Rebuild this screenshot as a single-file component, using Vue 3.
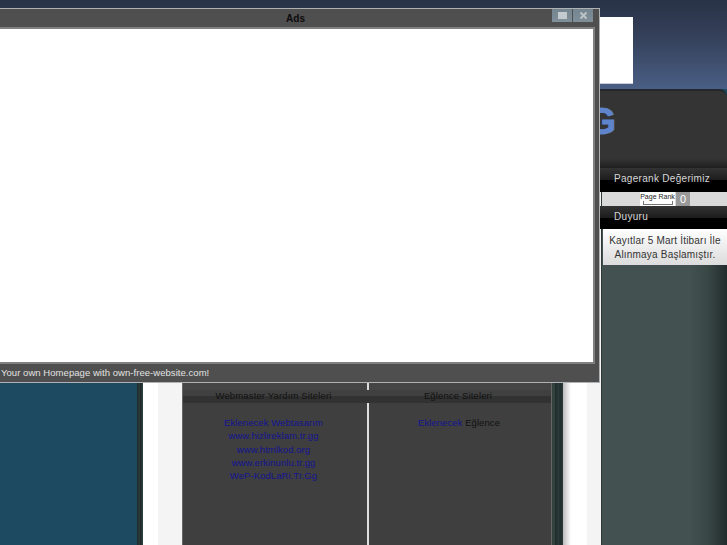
<script setup>
const webmasterLinks = [
  'Eklenecek Webtasarım',
  'www.hizlireklam.tr.gg',
  'www.htmlkod.org',
  'www.erkinunlu.tr.gg',
  'WeP-KodLaRi.Tr.Gg'
]
</script>

<template>
  <div class="page">
    <!-- Top band -->
    <header class="top">
      <div class="top-box"></div>
    </header>

    <div class="banner">
      <span class="logo">G</span>
    </div>

    <div class="columns">
      <div class="side-blue"></div>
      <div class="gutter"></div>
      <div class="margin-left"></div>

      <main class="main">
        <section class="col">
          <h3 class="col-head">Webmaster Yardım Siteleri</h3>
          <div class="col-body">
            <a v-for="link in webmasterLinks" :key="link" class="link">{{ link }}</a>
          </div>
        </section>
        <section class="col col-right">
          <h3 class="col-head">Eğlence Siteleri</h3>
          <div class="col-body">
            <div><a class="link inline">Eklenecek</a> Eğlence</div>
          </div>
        </section>
      </main>

      <div class="gutter wide"></div>
      <div class="margin-right"></div>

      <aside class="sidebar">
        <div class="side-head center">Pagerank Değerimiz</div>
        <div class="rank-strip">
          <div class="rank">
            <div class="rank-label">
              <span>Page Rank</span>
              <i class="rank-bar"></i>
            </div>
            <div class="rank-value">0</div>
          </div>
        </div>
        <div class="side-head second">Duyuru</div>
        <div class="notice">Kayıtlar 5 Mart İtibarı İle Alınmaya Başlamıştır.</div>
      </aside>
    </div>

    <!-- Popup window -->
    <div class="window">
      <div class="titlebar">
        <span class="title">Ads</span>
        <div class="buttons">
          <button class="win-btn"><i class="max-icon"></i></button>
          <button class="win-btn">
            <svg width="9" height="9" viewBox="0 0 9 9">
              <path d="M1.5 1.5 L7.5 7.5 M7.5 1.5 L1.5 7.5" stroke="#bcc3c8" stroke-width="2" fill="none" />
            </svg>
          </button>
        </div>
      </div>
      <div class="client"></div>
      <div class="statusbar">Your own Homepage with own-free-website.com!</div>
    </div>
  </div>
</template>

<style scoped>
.page {
  position: relative;
  width: 727px;
  height: 545px;
  overflow: hidden;
  display: flex;
  flex-direction: column;
  background: #1d4a60;
  font-family: "Liberation Sans", Arial, sans-serif;
}

.top {
  height: 89px;
  display: flex;
  justify-content: flex-end;
  align-items: flex-start;
  padding: 17px 94px 0 0;
  box-sizing: border-box;
  background: linear-gradient(180deg, #293246 0%, #35425c 45%, #4a5f85 100%);
}

.top-box {
  width: 200px;
  height: 67px;
  background: #fff;
  border-bottom: 1px solid #ccd;
  box-sizing: border-box;
}

.banner {
  height: 79px;
  margin-left: 143px;
  box-sizing: border-box;
  display: flex;
  justify-content: flex-end;
  background: linear-gradient(180deg, #343434 0%, #343434 88%, #1f1f1f 100%);
  border-top: 2px solid #23272c;
  border-top-right-radius: 8px;
  padding-right: 111px;
}

.logo {
  font-size: 37px;
  line-height: 37px;
  margin-top: 12px;
  font-weight: 700;
  color: #5f84cc;
  -webkit-text-stroke: 1px #5f84cc;
}

.columns {
  flex: 1;
  display: flex;
}

.side-blue {
  width: 137px;
  background: #1d4a60;
}

.gutter {
  width: 6px;
  background: linear-gradient(90deg, #1c2a2a, #2c3c3a 40%, #1c2a2a 60%, #33423f);
}

.gutter.wide {
  width: 11px;
  background: linear-gradient(90deg, #33423f 0, #33423f 3px, #1f2c2b 3px, #2c3c3a 7px, #1f2c2b 8px, #2b3a38 100%);
}

.margin-left {
  width: 39px;
  background: linear-gradient(90deg, #fff 0, #fff 15px, #f4f4f4 15px);
}

.margin-right {
  width: 39px;
  box-sizing: border-box;
  border-right: 1px solid #2e3a38;
  background: linear-gradient(90deg, #bbb 0, #fff 8px, #fff 24px, #f4f4f4 24px);
}

.main {
  width: 370px;
  box-sizing: border-box;
  display: flex;
  padding-top: 215px;
  background: #3f3f3f;
  border-left: 1px solid #666;
  border-right: 1px solid #666;
}

.col {
  width: 184px;
  position: relative;
}

.col-right {
  flex: 1;
  width: auto;
  border-left: 2px solid #ddd;
}

.col-head {
  margin: 0;
  height: 20px;
  padding-right: 3px;
  line-height: 26px;
  text-align: center;
  font-size: 9.5px;
  font-weight: 400;
  letter-spacing: 0.14px;
  color: #111;
  background: linear-gradient(180deg, #454545 0, #454545 7px, #404040 7px, #404040 13px, #323232 13px);
  position: relative;
}

.col-right .col-head {
  margin-left: -2px;
  padding-right: 2px;
}

/* the white divider shows again above the heading stripe */
.col-right .col-head::before {
  content: '';
  position: absolute;
  left: 0;
  top: 0;
  width: 2px;
  height: 7px;
  background: #ddd;
}

.col-body {
  padding: 13px 3px 0 0;
  display: flex;
  flex-direction: column;
  align-items: center;
  font-size: 9.5px;
  line-height: 13.3px;
  letter-spacing: 0.07px;
  color: #111;
}

.col-right .col-body {
  padding-right: 2px;
}

.link {
  color: #14148f;
}

.sidebar {
  width: 125px;
  display: flex;
  flex-direction: column;
  background: linear-gradient(90deg, #435250 0, #435250 70%, #384644 85%, #222c2c 100%);
}

.side-head {
  height: 24px;
  margin-left: -3px;
  padding-left: 15px;
  line-height: 21px;
  font-size: 10px;
  letter-spacing: 0.3px;
  color: #d5d5d5;
  background: linear-gradient(180deg, #333 0, #1c1c1c 50%, #000 50%);
  box-sizing: border-box;
}

.side-head.second {
  height: 23px;
}

.side-head.center {
  padding: 0 2px 0 0;
  text-align: center;
}

.rank-strip {
  height: 14px;
  display: flex;
  padding-left: 38px;
  background: #d9d9d9;
}

.rank {
  display: flex;
  gap: 1px;
  height: 14px;
}

.rank-label {
  width: 35px;
  padding-top: 1px;
  box-sizing: border-box;
  background: #fff;
  font-size: 7px;
  line-height: 8px;
  white-space: nowrap;
  text-align: center;
  color: #222;
  display: flex;
  flex-direction: column;
  align-items: center;
}

.rank-bar {
  width: 30px;
  height: 4px;
  box-sizing: border-box;
  border: 1px solid #777;
  border-top: none;
}

.rank-value {
  width: 14px;
  background: #999;
  color: #fff;
  font-size: 11px;
  line-height: 14px;
  text-align: center;
}

.notice {
  height: 36px;
  margin-left: 1px;
  padding-top: 5px;
  box-sizing: border-box;
  text-align: center;
  font-size: 10px;
  line-height: 14px;
  letter-spacing: 0.2px;
  color: #333;
  background: linear-gradient(180deg, #fff, #dcdcdc);
}

.window {
  position: absolute;
  left: -8px;
  top: 8px;
  width: 608px;
  height: 375px;
  box-sizing: border-box;
  display: flex;
  flex-direction: column;
  background: #4f4f4f;
  border: 1px solid #aeb2b4;
  border-left: none;
}

.titlebar {
  height: 18px;
  position: relative;
  display: flex;
  justify-content: center;
}

.title {
  font-size: 10px;
  font-weight: 700;
  line-height: 20px;
  color: #0c0c0c;
}

.buttons {
  position: absolute;
  right: 6px;
  top: 0;
  display: flex;
  gap: 1px;
}

.win-btn {
  width: 20px;
  height: 13px;
  padding: 0;
  border: none;
  display: flex;
  align-items: center;
  justify-content: center;
  background: linear-gradient(180deg, #75858f, #7f909b);
}

.max-icon {
  width: 9px;
  height: 7px;
  background: #c4cbd0;
}

.client {
  flex: 1;
  margin-right: 4px;
  background: #fff;
  border: 2px solid #808080;
  border-left: none;
}

.statusbar {
  height: 18px;
  padding-left: 9px;
  line-height: 18px;
  font-size: 9.5px;
  letter-spacing: 0.05px;
  color: #e2e2e2;
}
</style>

<style>
html,
body {
  margin: 0;
  overflow: hidden;
}
</style>
